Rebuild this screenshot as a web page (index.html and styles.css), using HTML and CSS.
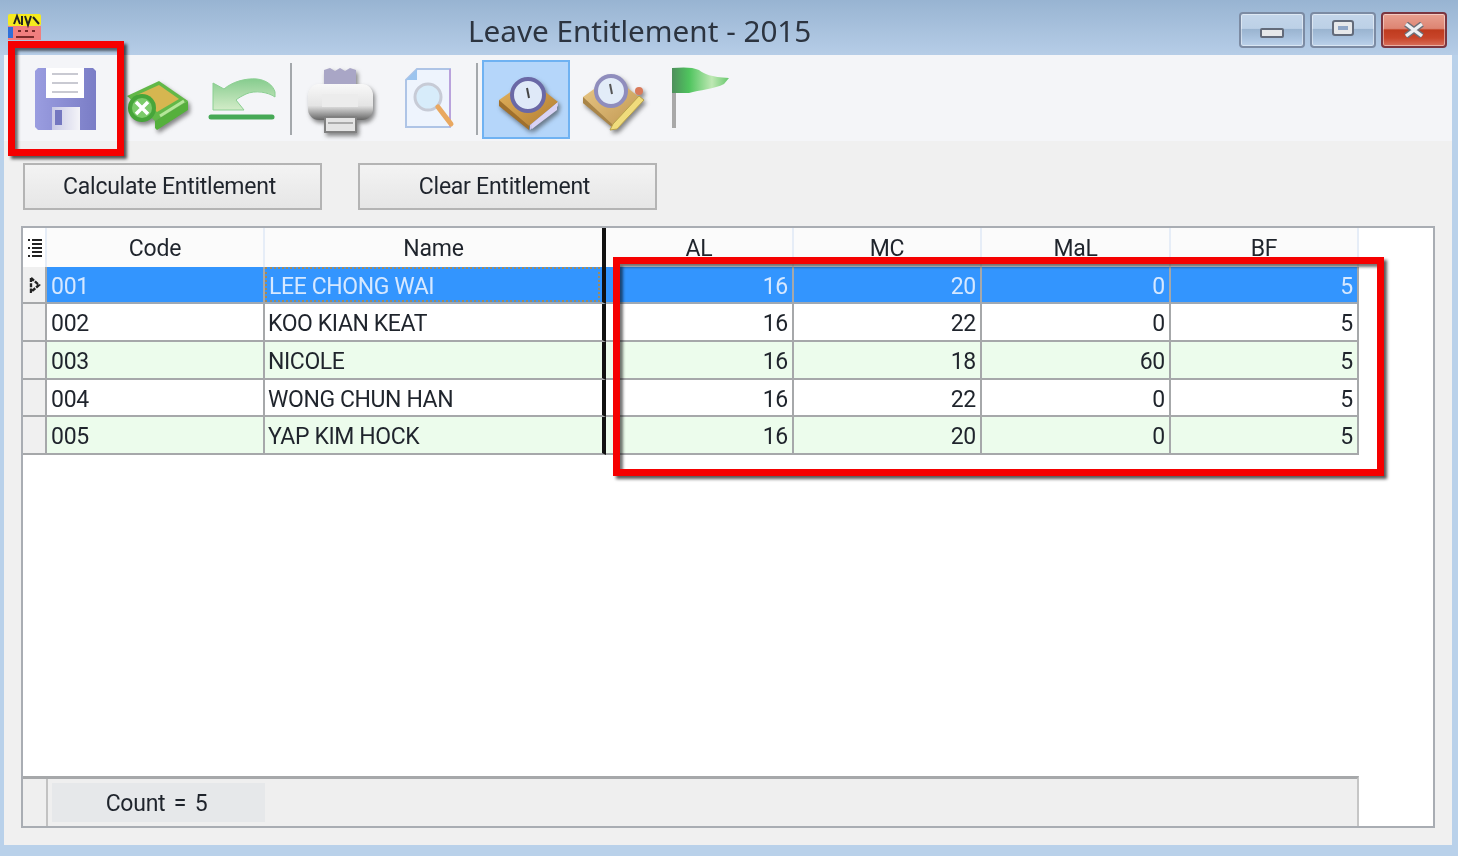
FILE: index.html
```html
<!DOCTYPE html>
<html lang="en">
<head>
  <meta charset="UTF-8">
  <title>Leave Entitlement - 2015</title>
  <link rel="stylesheet" href="styles.css">
</head>
<body>
<div class="window">
  <div class="soft">

    <div class="titlebar">
      <svg class="app-icon" viewBox="8 13 33 27" width="33" height="27">
        <rect x="8" y="26" width="33" height="14" fill="#f17f7f"/>
        <rect x="8" y="14" width="33" height="12" rx="2" fill="#f6ea1e"/>
        <rect x="8" y="27" width="5" height="11" fill="#2f6fd8"/>
        <path d="M14 24l3-8 3 8M22 16v9M25 16l3 9 3-9M33 17l6 7" stroke="#222" stroke-width="2" fill="none"/>
        <path d="M18 31h3M25 31h3M32 31h3M16 37h18" stroke="#7a2a2a" stroke-width="2"/>
      </svg>
      <div class="title">Leave Entitlement - 2015</div>
      <div class="win-buttons">
        <div class="win-btn"><span class="glyph-min"></span></div>
        <div class="win-btn"><span class="glyph-max"></span></div>
        <div class="win-btn close">
          <svg viewBox="0 0 24 16" width="24" height="16"><path d="M4 2l16 12M20 2L4 14" stroke="#6b6f78" stroke-width="6"/><path d="M4 2l16 12M20 2L4 14" stroke="#eceff2" stroke-width="3.4"/></svg>
        </div>
      </div>
    </div>

    <div class="content">
      <div class="toolbar">
        <div class="tool">
          <svg viewBox="22 60 88 79" width="88" height="79">
            <defs><linearGradient id="fl" x1="0" x2="1" y1="0" y2="0"><stop offset="0" stop-color="#9a9de0"/><stop offset="1" stop-color="#7a7dc6"/></linearGradient>
            <linearGradient id="sl" x1="0" x2="1" y1="0" y2="0"><stop offset="0" stop-color="#c9cae6"/><stop offset="1" stop-color="#f4f4f8"/></linearGradient></defs>
            <path d="M38 68h55l3 3v59H38l-3-3V71z" fill="url(#fl)"/>
            <rect x="46" y="68" width="38" height="30" fill="#fff"/>
            <path d="M52 74h26M52 83h26M52 92h26" stroke="#c9cad2" stroke-width="2"/>
            <rect x="52" y="107" width="28" height="23" fill="url(#sl)"/>
            <rect x="55" y="110" width="7" height="15" fill="#7477c0"/>
          </svg>
        </div>
        <div class="tool shadowed">
          <svg viewBox="110 60 88 79" width="88" height="79">
            <path d="M127 96l32-15 29 20-33 20z" fill="#62b848"/>
            <path d="M137 95l22-10 20 14-22 13z" fill="#d6b650"/>
            <path d="M155 121l33-20v9l-31 20-2-2z" fill="#55b03c"/>
            <path d="M160 116l24-15" stroke="#b4e698" stroke-width="3"/>
            <circle cx="142" cy="108" r="14" fill="#47a53a"/>
            <circle cx="142" cy="108" r="10" fill="#7ccb6a"/>
            <path d="M136 102l12 12M148 102l-12 12" stroke="#fff" stroke-width="3.5"/>
          </svg>
        </div>
        <div class="tool">
          <svg viewBox="198 60 88 79" width="88" height="79">
            <defs><linearGradient id="un" x1="0" x2="0" y1="0" y2="1"><stop offset="0" stop-color="#86cc8e"/><stop offset="1" stop-color="#d3ecc8"/></linearGradient></defs>
            <path d="M213 83L224 89C232 82 245 78 257 79C266 80 273 85 275 92L275 97C268 92 255 90 246 94C242 96 238 98 236 100L244 110L213 110Z" fill="url(#un)" stroke="#8bcf92"/>
            <path d="M211 117h61" stroke="#46a956" stroke-width="5" stroke-linecap="round"/>
          </svg>
        </div>
        <div class="tool-sep"></div>
        <div class="tool shadowed">
          <svg viewBox="297 60 88 79" width="88" height="79">
            <defs><linearGradient id="pr" x1="0" x2="0" y1="0" y2="1"><stop offset="0" stop-color="#f8f8f8"/><stop offset=".6" stop-color="#e4e4e4"/><stop offset="1" stop-color="#666"/></linearGradient></defs>
            <path d="M325 70l6-2 5 3 5-3 5 3 5-3 6 2v20h-32z" fill="#a9a6c6"/>
            <rect x="309" y="84" width="65" height="36" rx="11" fill="url(#pr)"/>
            <rect x="323" y="94" width="36" height="13" fill="#ececec"/>
            <rect x="326" y="117" width="31" height="15" fill="#e4e4e4" stroke="#808080" stroke-width="2"/>
            <path d="M329 123h25" stroke="#aaa" stroke-width="2"/>
          </svg>
        </div>
        <div class="tool">
          <svg viewBox="385 60 88 79" width="88" height="79">
            <path d="M418 69h33v58h-44V80z" fill="#eef4fd" stroke="#aec4e6" stroke-width="2"/>
            <path d="M451 69v58" stroke="#b9a2dc" stroke-width="2"/>
            <path d="M418 69v11h-11z" fill="#9cc4ee"/>
            <circle cx="429" cy="97" r="13" fill="#d7ecfa" stroke="#c7cbd6" stroke-width="3"/>
            <path d="M439 107l13 17" stroke="#e9a860" stroke-width="5" stroke-linecap="round"/>
          </svg>
        </div>
        <div class="tool-sep"></div>
        <div class="tool active shadowed">
          <svg viewBox="485 62 84 75" width="84" height="75">
            <defs><linearGradient id="bk" x1="0" x2="1" y1="0" y2="1"><stop offset="0" stop-color="#e6b660"/><stop offset="1" stop-color="#b17c30"/></linearGradient></defs>
            <path d="M498 98l30-21 29 23-29 24-30-23z" fill="url(#bk)"/>
            <path d="M498 98v6l30 24v-4z" fill="#a0702c"/>
            <path d="M529 128l28-24v-4l-28 23z" fill="#cfc8f0"/>
            <path d="M531 122l25-21v7l-25 19z" fill="#d9d3f5"/>
            <circle cx="527" cy="93" r="16" fill="#dfe9f8" stroke="#6a68a6" stroke-width="4"/>
            <path d="M526 86l2 10" stroke="#444" stroke-width="2"/>
          </svg>
        </div>
        <div class="tool shadowed">
          <svg viewBox="571 60 88 79" width="88" height="79">
            <defs><linearGradient id="bk2" x1="0" x2="1" y1="0" y2="1"><stop offset="0" stop-color="#eccb8a"/><stop offset="1" stop-color="#bf9650"/></linearGradient></defs>
            <path d="M584 97l29-21 31 24-30 25-30-22z" fill="url(#bk2)"/>
            <path d="M584 97v6l30 25v-3z" fill="#a98548"/>
            <path d="M614 124l26-28 5 4-27 29-7 1z" fill="#f0dc7c" stroke="#b9a24c"/>
            <circle cx="640" cy="91" r="4" fill="#d97a5a"/>
            <circle cx="612" cy="91" r="15" fill="#e2ecf8" stroke="#8f8dbd" stroke-width="4"/>
            <path d="M611 84l2 10" stroke="#555" stroke-width="2"/>
          </svg>
        </div>
        <div class="tool">
          <svg viewBox="659 60 88 79" width="88" height="79">
            <defs><linearGradient id="fg" x1="0" x2="1" y1="0" y2="0"><stop offset="0" stop-color="#4d8f5c"/><stop offset=".3" stop-color="#4fc45e"/><stop offset=".7" stop-color="#bfe8b4"/><stop offset="1" stop-color="#68c86e"/></linearGradient></defs>
            <path d="M675 68v60" stroke="#a8a8a8" stroke-width="4"/>
            <path d="M673 68C684 67 694 67 700 70C705 74 712 77 730 78L725 84C716 89 700 90 690 93L673 93Z" fill="url(#fg)"/>
          </svg>
        </div>
      </div>

      <div class="actions">
        <button class="action">Calculate Entitlement</button>
        <button class="action">Clear Entitlement</button>
      </div>

      <div class="grid-box">
        <div class="grid">
          <div class="hd corner">
            <svg viewBox="0 0 14 22" width="14" height="22"><path d="M4 3h10M4 7h10M4 11h10M4 15h10M4 19h10" stroke="#222" stroke-width="2"/><path d="M0 3h2M0 11h2M0 19h2" stroke="#222" stroke-width="2"/></svg>
          </div>
          <div class="hd">Code</div>
          <div class="hd name-hd">Name</div>
          <div class="hd">AL</div>
          <div class="hd">MC</div>
          <div class="hd">MaL</div>
          <div class="hd">BF</div>

          <div class="ind"><svg viewBox="0 0 12 16" width="12" height="16"><path d="M2 1l8 7-8 7z" fill="none" stroke="#222" stroke-width="2.4" stroke-dasharray="4 1.2"/></svg></div>
          <div class="cell sel">001</div>
          <div class="cell sel name"><span class="focus">LEE CHONG WAI</span></div>
          <div class="cell sel num">16</div>
          <div class="cell sel num">20</div>
          <div class="cell sel num">0</div>
          <div class="cell sel num">5</div>

          <div class="ind"></div>
          <div class="cell">002</div>
          <div class="cell name">KOO KIAN KEAT</div>
          <div class="cell num">16</div>
          <div class="cell num">22</div>
          <div class="cell num">0</div>
          <div class="cell num">5</div>

          <div class="ind"></div>
          <div class="cell alt">003</div>
          <div class="cell alt name">NICOLE</div>
          <div class="cell alt num">16</div>
          <div class="cell alt num">18</div>
          <div class="cell alt num">60</div>
          <div class="cell alt num">5</div>

          <div class="ind"></div>
          <div class="cell">004</div>
          <div class="cell name">WONG CHUN HAN</div>
          <div class="cell num">16</div>
          <div class="cell num">22</div>
          <div class="cell num">0</div>
          <div class="cell num">5</div>

          <div class="ind"></div>
          <div class="cell alt">005</div>
          <div class="cell alt name">YAP KIM HOCK</div>
          <div class="cell alt num">16</div>
          <div class="cell alt num">20</div>
          <div class="cell alt num">0</div>
          <div class="cell alt num">5</div>
        </div>

        <div class="grid-footer">
          <div class="foot-ind"></div>
          <div class="foot-count">Count = 5</div>
        </div>
      </div>
    </div>
  </div>

  <div class="mark mark-save"></div>
  <div class="mark mark-values"></div>
</div>
</body>
</html>
```

FILE: styles.css
```css
html, body {
  margin: 0;
  height: 100%;
  overflow: hidden;
}
body {
  font-family: Roboto, "Liberation Sans", sans-serif;
  font-size: 23px;
  letter-spacing: -0.25px;
  color: #1f242c;
}
.window {
  position: relative;
  width: 1458px;
  height: 856px;
  overflow: hidden;
  background-color: #b9d1ea;
}
.soft {
  height: 100%;
  display: flex;
  flex-direction: column;
  filter: blur(0.7px);
}

/* title bar */
.titlebar {
  height: 55px;
  flex: none;
  display: flex;
  align-items: flex-start;
  background: linear-gradient(#98b4d2, #b6cde7);
}
.app-icon {
  margin: 13px 0 0 8px;
}
.title {
  margin: 11px 0 0 427px;
  font-family: "Noto Sans", sans-serif;
  font-size: 29.7px;
  letter-spacing: 0;
  line-height: 40px;
  color: #2c3440;
}
.win-buttons {
  margin: 12px 11px 0 auto;
  display: flex;
  gap: 5px;
}
.win-btn {
  width: 62px;
  height: 32px;
  display: flex;
  align-items: center;
  justify-content: center;
  border: 2px solid #7c8ba3;
  border-radius: 4px;
  background: linear-gradient(#c4d6ea 0, #bcd0e6 45%, #9ab4d0 48%, #a9c2de 75%, #bdd2ea 100%);
  box-shadow: inset 0 0 0 1px rgba(255, 255, 255, 0.45);
}
.win-btn.close {
  border-color: #7b3640;
  background: linear-gradient(#e8a090 0, #dd8573 45%, #bf3b1e 50%, #c8452a 75%, #d9705c 100%);
}
.glyph-min {
  width: 20px;
  height: 6px;
  margin-top: 6px;
  background-color: #e6e8ea;
  border: 2px solid #636b7a;
  border-radius: 2px;
}
.glyph-max {
  width: 10px;
  height: 4px;
  margin-bottom: 4px;
  background-color: #8fa6c6;
  border: 4px solid #e6e8ea;
  outline: 2px solid #636b7a;
  border-radius: 1px;
}

/* client area */
.content {
  flex: 1;
  margin: 0 6px 11px 4px;
  background-color: #f0f0f0;
  display: flex;
  flex-direction: column;
  min-height: 0;
}
.toolbar {
  height: 86px;
  flex: none;
  box-sizing: border-box;
  padding: 5px 0 0 18px;
  display: flex;
  align-items: flex-start;
  background-color: #f4f5f8;
}
.tool {
  width: 88px;
  height: 79px;
  box-sizing: border-box;
}
.tool svg {
  display: block;
}
.tool.shadowed svg {
  filter: drop-shadow(2px 3px 2px rgba(40, 40, 40, 0.55));
}
.tool.active {
  padding: 2px;
  background-color: #b5d6fa;
  border: 2px solid #6fb2f2;
}
.tool-sep {
  width: 2px;
  height: 72px;
  margin: 3px 4px 0;
  background-color: #a4a8ac;
}
.actions {
  flex: none;
  display: flex;
  gap: 36px;
  margin: 22px 0 0 19px;
}
.action {
  width: 299px;
  height: 47px;
  padding: 0 6px 0 0;
  border: 2px solid #b4b4b4;
  background: linear-gradient(#f3f3f3, #e6e6e6);
  font-family: inherit;
  font-size: 23px;
  letter-spacing: inherit;
  color: inherit;
}

/* data grid */
.grid-box {
  width: 1414px;
  height: 602px;
  flex: none;
  box-sizing: border-box;
  margin: 16px 0 0 17px;
  border: 2px solid #a9adb3;
  background-color: #fff;
  display: flex;
  flex-direction: column;
  justify-content: space-between;
}
.grid {
  width: 1336px;
  display: grid;
  grid-template-columns: 24px 218px 341px 188px 188px 189px 188px;
  grid-template-rows: 39px 37px 38px 38px 37px 38px;
}
.hd {
  display: flex;
  align-items: center;
  justify-content: center;
  padding-top: 2px;
  background-color: #fbfbfb;
  border-right: 2px solid #e6edf7;
  box-sizing: border-box;
}
.corner {
  padding: 0 0 0 2px;
  background-color: #fff;
}
.name-hd {
  border-right: 4px solid #111;
}
.ind {
  display: flex;
  align-items: center;
  justify-content: center;
  padding-left: 2px;
  background-color: #f0f0f0;
  border-right: 2px solid #a6a8aa;
  border-bottom: 2px solid #a6a8aa;
  box-sizing: border-box;
}
.cell {
  display: flex;
  align-items: center;
  padding: 3px 4px 0;
  background-color: #fff;
  border-right: 2px solid #a6a8aa;
  border-bottom: 2px solid #a6a8aa;
  box-sizing: border-box;
  white-space: nowrap;
}
.cell.alt {
  background-color: #ecfcec;
}
.cell.name {
  padding-left: 3px;
  letter-spacing: -0.4px;
  border-right: 4px solid #111;
}
.cell.num {
  justify-content: flex-end;
  padding-right: 4px;
}
.cell.sel {
  background-color: #3395fe;
  color: #d6e8ff;
  border-bottom-color: #9fa9b4;
}
.cell.sel.name {
  padding: 0 2px 0 0;
}
.focus {
  flex: 1;
  height: 100%;
  display: flex;
  align-items: center;
  padding: 3px 0 0 2px;
  box-sizing: border-box;
  border: 2px dotted #a08a5c;
}
.grid-footer {
  width: 1336px;
  height: 50px;
  box-sizing: border-box;
  display: flex;
  align-items: center;
  background-color: #efefef;
  border-top: 3px solid #a6a8aa;
  border-right: 2px solid #c6c6c6;
}
.foot-ind {
  width: 23px;
  height: 100%;
  border-right: 2px solid #c2c2c2;
}
.foot-count {
  width: 213px;
  height: 39px;
  margin-left: 4px;
  padding: 2px 4px 0 0;
  box-sizing: border-box;
  display: flex;
  align-items: center;
  justify-content: center;
  word-spacing: 3px;
  background-color: #e6e8ea;
}

/* red annotations drawn on top of the screenshot */
.mark {
  position: absolute;
  box-sizing: border-box;
  border: 7px solid #f50000;
  box-shadow: 3px 3px 3px rgba(0, 0, 0, 0.65), inset 3px 3px 3px rgba(0, 0, 0, 0.55);
}
.mark-save {
  left: 8px;
  top: 41px;
  width: 116px;
  height: 115px;
}
.mark-values {
  left: 613px;
  top: 257px;
  width: 771px;
  height: 219px;
}
```
